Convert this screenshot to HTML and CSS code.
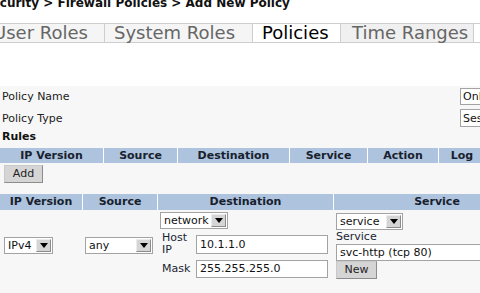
FILE: index.html
```html
<!DOCTYPE html>
<html lang="en">
  <head>
    <meta charset="UTF-8" />
    <meta name="viewport" content="width=device-width, initial-scale=1.0" />
    <title>Add New Policy</title>
    <link rel="stylesheet" href="styles.css">
  </head>
  <body>
    <div class="crumb">Security &gt; Firewall Policies &gt; Add New Policy</div>

    <ul class="tabs">
      <li class="tab tab-users">User Roles</li>
      <li class="tab tab-system">System Roles</li>
      <li class="tab tab-policies">Policies</li>
      <li class="tab tab-ranges">Time Ranges</li>
    </ul>

    <div class="panel">
      <div class="field">
        <span class="field-label">Policy Name</span>
        <input type="text" class="field-input" value="Onl" />
      </div>
      <div class="field field-type">
        <span class="field-label">Policy Type</span>
        <input type="text" class="field-input" value="Ses" />
      </div>

      <div class="rules-title">Rules</div>
      <div class="rules-head">
        <div class="head-cell">IP Version</div>
        <div class="head-cell">Source</div>
        <div class="head-cell">Destination</div>
        <div class="head-cell">Service</div>
        <div class="head-cell">Action</div>
        <div class="head-cell">Log</div>
      </div>
      <div class="rules-actions">
        <button type="button" class="btn btn-add">Add</button>
      </div>

      <div class="rule-table">
        <div class="head-cell">IP Version</div>
        <div class="head-cell">Source</div>
        <div class="head-cell">Destination</div>
        <div class="head-cell">Service</div>

        <div class="cell cell-ip">
          <span class="select select-ip"><span>IPv4</span><span class="select-btn"></span></span>
        </div>
        <div class="cell cell-source">
          <span class="select select-source"><span>any</span><span class="select-btn"></span></span>
        </div>
        <div class="cell cell-dest">
          <span class="select select-dest"><span>network</span><span class="select-btn"></span></span>
          <div class="dest-row dest-host">
            <span class="dest-label">Host IP</span>
            <input type="text" class="dest-input host-input" value="10.1.1.0" />
          </div>
          <div class="dest-row dest-mask">
            <span class="dest-label">Mask</span>
            <input type="text" class="dest-input" value="255.255.255.0" />
          </div>
        </div>
        <div class="cell cell-service">
          <span class="select select-service"><span>service</span><span class="select-btn"></span></span>
          <span class="service-label">Service</span>
          <input type="text" class="service-input" value="svc-http (tcp 80)" />
          <button type="button" class="btn btn-new">New</button>
        </div>
      </div>
    </div>
  </body>
</html>
```

FILE: styles.css
```css
body {
  margin: 0;
  width: 480px;
  height: 293px;
  overflow: hidden;
  font-family: "DejaVu Sans", Verdana, sans-serif;
  font-size: 11px;
  color: #222;
  background-color: #fff;
}
input,
button {
  font-family: inherit;
  font-size: 11px;
  margin: 0;
  box-sizing: border-box;
}
input[type="text"] {
  border: 1px solid #a3a3a3;
  background-color: #fff;
  color: #111;
  padding: 0 3px;
}
.crumb {
  margin-top: -4px;
  text-indent: -17px;
  font-size: 12px;
  font-weight: bold;
  line-height: 14px;
  white-space: nowrap;
  color: #111;
}
.tabs {
  display: flex;
  list-style: none;
  margin: 13px 0 0;
  padding: 0;
  border-top: 1px solid #cdcdcd;
  border-bottom: 1px solid #cdcdcd;
}
.tab {
  flex: none;
  box-sizing: border-box;
  padding: 0 9px;
  border-right: 1px solid #cdcdcd;
  background-color: #f5f5f5;
  color: #666;
  font-size: 18px;
  line-height: 18px;
  white-space: nowrap;
}
.tab-users {
  width: 121px;
  margin-left: -16px;
}
.tab-system {
  width: 148px;
}
.tab-policies {
  width: 88px;
  background-color: #fff;
  color: #000;
}
.tab-ranges {
  width: 133px;
  padding-left: 11px;
  background-color: #f0f0f0;
}
.panel {
  margin-top: 43px;
  padding-top: 2px;
  min-height: 300px;
  background-color: #f7f7f7;
}
.field {
  display: flex;
  align-items: center;
  height: 17px;
  padding-left: 2px;
  white-space: nowrap;
}
.field-type {
  margin-top: 4px;
  height: 18px;
}
.field-label {
  flex: none;
  width: 458px;
}
.field-input {
  flex: none;
  width: 120px;
  height: 100%;
}
input.field-input {
  padding-left: 2px;
}
.rules-title {
  margin-top: 3px;
  padding-left: 2px;
  font-weight: bold;
  line-height: 14px;
  color: #111;
}
.rules-head {
  display: grid;
  grid-template-columns: 103px 74px 112px 78px 71px 47px;
  margin-top: 4px;
}
.head-cell {
  box-sizing: border-box;
  background-color: #aec4de;
  text-align: center;
  font-weight: bold;
  line-height: 15px;
  color: #18212d;
  white-space: nowrap;
}
.head-cell + .head-cell {
  border-left: 1px solid #fff;
}
.rules-actions {
  display: flex;
  margin-top: 2px;
  padding-left: 4px;
}
.btn {
  height: 18px;
  padding: 0;
  background-color: #d5d5d5;
  border: 1px solid;
  border-color: #c9c9c9 #8c8c8c #8c8c8c #c9c9c9;
  color: #222;
  line-height: 16px;
}
.btn-add {
  width: 39px;
}
.rule-table {
  display: grid;
  grid-template-columns: 82px 75px 176px 207px;
  margin-top: 11px;
}
.rule-table .head-cell {
  line-height: 16px;
}
.cell {
  box-sizing: border-box;
  display: flex;
  padding: 2px 0 3px 3px;
  min-height: 71px;
}
.cell-ip {
  align-items: center;
  padding-left: 4px;
}
.cell-source {
  align-items: center;
}
.cell-dest {
  flex-direction: column;
  align-items: flex-start;
}
.cell-service {
  flex-direction: column;
  align-items: flex-start;
  padding-top: 3px;
  padding-bottom: 2px;
}
.select {
  display: inline-flex;
  flex: none;
  align-items: center;
  justify-content: space-between;
  box-sizing: border-box;
  height: 17px;
  padding: 0 1px 0 3px;
  border: 1px solid #a3a3a3;
  background-color: #fff;
  color: #111;
  white-space: nowrap;
}
.select-btn {
  display: flex;
  align-items: center;
  justify-content: center;
  box-sizing: border-box;
  width: 15px;
  height: 13px;
  background-color: #d5d5d5;
  border: 1px solid;
  border-color: #ececec #8c8c8c #8c8c8c #ececec;
}
.select-btn::after {
  content: "";
  border-left: 4px solid transparent;
  border-right: 4px solid transparent;
  border-top: 5px solid #000;
}
.select-ip {
  width: 49px;
}
.select-source {
  width: 68px;
}
.select-dest {
  width: 68px;
}
.select-service {
  width: 67px;
}
.dest-row {
  display: flex;
  align-items: center;
  padding-left: 2px;
}
.dest-host {
  margin-top: 3px;
}
.dest-mask {
  margin-top: 3px;
  height: 19px;
}
.dest-label {
  flex: none;
  width: 34px;
  line-height: 12px;
  color: #1a1f33;
}
.dest-input {
  flex: none;
  width: 132px;
  height: 18px;
}
.host-input {
  height: 19px;
}
.service-label {
  line-height: 14px;
  color: #1a1f33;
}
.service-input {
  width: 220px;
  height: 17px;
}
.btn-new {
  width: 41px;
}
```
